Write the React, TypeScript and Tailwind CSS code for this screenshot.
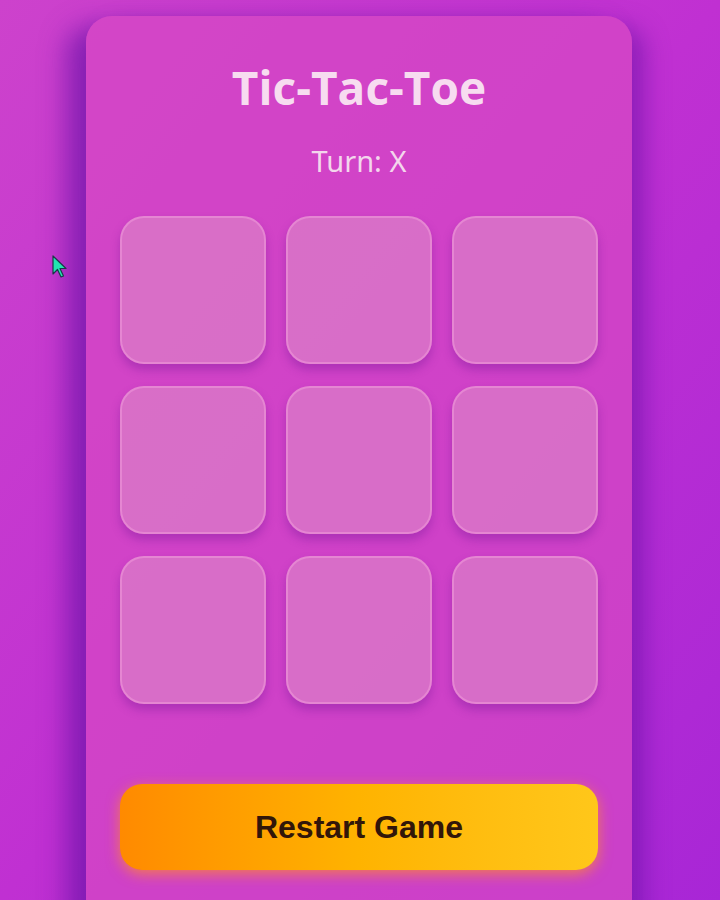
import React from 'react'

const cells = Array.from({ length: 9 }, (_, i) => i)

export default function App() {
  return (
    <div className="relative h-[900px] w-[720px] overflow-hidden bg-gradient-to-br from-[#cd42cc] via-[#c030d2] to-[#a826d6]">
      {/* cursor */}
      <svg className="absolute left-[52px] top-[255px]" width="16" height="24" viewBox="0 0 16 24">
        <path d="M1 1 L1 19 L5.5 14.5 L9 22 L11.5 21 L8 13.5 L14 13.5 Z" fill="#22e6b0" stroke="#1a3a4a" strokeWidth="1.2" strokeLinejoin="round" />
      </svg>

      <div className="ml-[86px] mt-[16px] flex h-[920px] w-[546px] flex-col items-center rounded-[26px] bg-[#d648c4]/75 px-[33px] pt-[48px] shadow-[-20px_10px_26px_rgba(110,20,170,0.7),14px_10px_22px_rgba(110,20,170,0.55)]">
        <h1 className="text-[46px] font-bold leading-none text-[#f7dcf0] [font-family:'Open_Sans',sans-serif]">
          Tic-Tac-Toe
        </h1>
        <p className="mt-[36px] text-[29px] leading-none text-[#f3d6ec] [font-family:'Noto_Sans',sans-serif]">
          Turn: X
        </p>

        <div className="mt-[41px] grid grid-cols-3 gap-x-[20px] gap-y-[22px]">
          {cells.map((i) => (
            <button
              key={i}
              className="h-[148px] w-[146px] rounded-[24px] border-2 border-[#ea90d6]/70 bg-[#dc80c8]/70 shadow-[0_6px_10px_rgba(110,20,150,0.35)]"
            />
          ))}
        </div>

        <button className="mt-[80px] h-[86px] w-[478px] rounded-[22px] bg-gradient-to-r from-[#ff8a00] via-[#ffb300] to-[#ffc71a] text-[32px] font-bold text-[#321609] shadow-[0_4px_14px_rgba(255,140,40,0.75)] [font-family:'Liberation_Sans',Arial,sans-serif]">
          Restart Game
        </button>
      </div>
    </div>
  )
}
